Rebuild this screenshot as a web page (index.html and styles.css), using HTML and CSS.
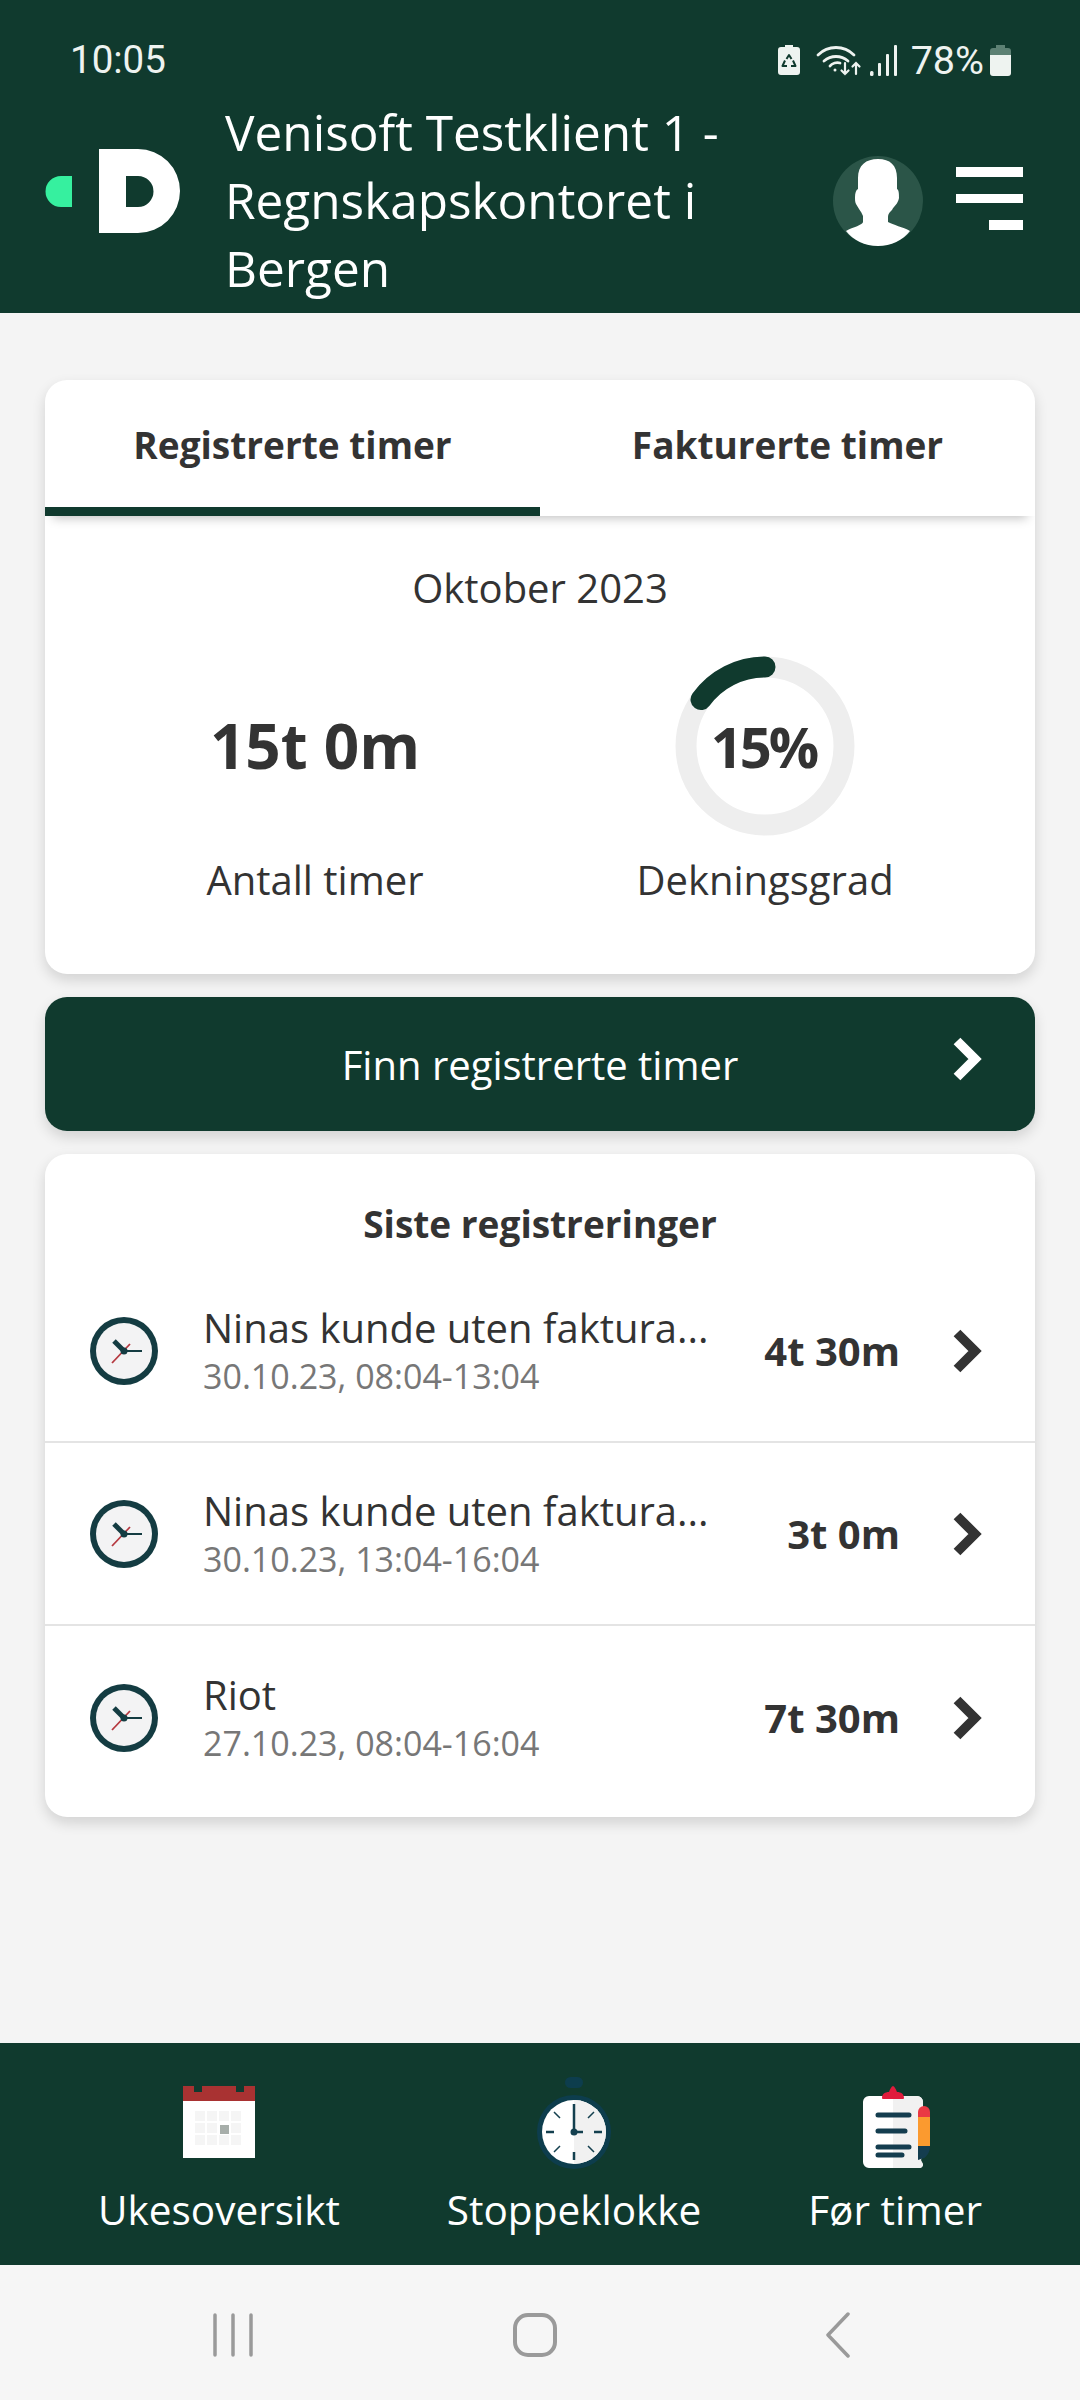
FILE: index.html
```html
<!DOCTYPE html>
<html lang="en">
<head>
    <meta charset="UTF-8">
    <meta name="viewport" content="width=device-width, initial-scale=1.0">
    <title>Timer</title>
    <link rel="stylesheet" href="styles.css">
</head>
<body>
    <header class="top">
        <div class="status">
            <span class="time">10:05</span>
            <div class="status-right">
                <svg class="st-saver" viewBox="0 0 22 30"><path fill="#eef3f0" d="M7 0h8v2h4a3 3 0 0 1 3 3v22a3 3 0 0 1-3 3H3a3 3 0 0 1-3-3V5a3 3 0 0 1 3-3h4z"/><path fill="none" stroke="#103a2e" stroke-width="2" stroke-linejoin="round" d="M8.500 14l2.500-4 2.500 4M15 15.500l2.500 5.500h-4.500M9 21H4.500L7 15.500"/></svg>
                <svg class="st-wifi" viewBox="0 0 46 32" fill="none" stroke="#eef3f0" stroke-width="2.800" stroke-linecap="round"><path d="M2 11C12 1 28 1 38 11"/><path d="M8 17c7-6 17-6 24 0"/><path d="M14 22c2-3 7-4 10-3"/><circle cx="19" cy="26" r="1.500" fill="#eef3f0" stroke="none"/><path stroke-width="2.200" d="M29 19v11m-3.500-3.500L29 30l3.500-3.500M40 30V19m-3.500 3.500L40 19l3.500 3.500"/></svg>
                <svg class="st-signal" viewBox="0 0 27 31" fill="#eef3f0"><rect x="0" y="26" width="3.500" height="5" rx="1.500"/><rect x="8" y="18" width="3" height="13" rx="1"/><rect x="16" y="9" width="3" height="22" rx="1"/><rect x="24" y="0" width="3" height="31" rx="1"/></svg>
                <span class="pct">78%</span>
                <svg class="st-batt" viewBox="0 0 21 31"><path fill="#5c8073" d="M6 0h9v3h3a3 3 0 0 1 3 3v4H0V6a3 3 0 0 1 3-3h3z"/><path fill="#eef3f0" d="M0 10h21v18a3 3 0 0 1-3 3H3a3 3 0 0 1-3-3z"/></svg>
            </div>
        </div>
        <div class="bar">
            <svg class="logo" viewBox="0 0 135 84">
                <path fill="#36f09f" d="M27 27v31H16a15.500 15.500 0 0 1 0-31z"/>
                <path fill="#fff" fill-rule="evenodd" d="M54 0h39a42 42 0 0 1 0 84H54zM81 27v31h12a15.500 15.500 0 0 0 0-31z"/>
            </svg>
            <h1 class="client">Venisoft Testklient 1 - Regnskapskontoret i Bergen</h1>
            <svg class="avatar" viewBox="0 0 90 90">
                <circle cx="45" cy="45" r="45" fill="#2b5548"/>
                <path fill="#fff" d="M25 22C25 9 33 3 45 3s19 6 19 19v11c2 1 2 5 2 9-1 6-5 8-7 12-3 3-4 4-4 8v4c5 3 15 5 22 9-7 9-19 15-32 15S20 84 13 75c7-4 17-6 17-9v-6c-2-5-5-8-7-12-1-2-1-4-1-7 0-4 1-7 3-8z"/>
            </svg>
            <div class="burger">
                <span></span>
                <span></span>
                <span class="short"></span>
            </div>
        </div>
    </header>

    <main class="content">
        <section class="card">
            <div class="tabs">
                <div class="tab active">Registrerte timer</div>
                <div class="tab">Fakturerte timer</div>
            </div>
            <p class="month">Oktober 2023</p>
            <div class="stats">
                <div class="stat">
                    <div class="stat-top"><span class="big">15t 0m</span></div>
                    <span class="stat-label">Antall timer</span>
                </div>
                <div class="stat">
                    <div class="stat-top ring-wrap">
                        <svg class="ring" viewBox="0 0 180 180" fill="none" stroke-width="21">
                            <circle cx="90" cy="90" r="79" stroke="#eeeeee"/>
                            <path d="M90 11A79 79 0 0 0 26 43.600" stroke="#103a2e" stroke-linecap="round"/>
                        </svg>
                        <span class="ring-text">15%</span>
                    </div>
                    <span class="stat-label">Dekningsgrad</span>
                </div>
            </div>
        </section>

        <a class="find-btn">
            <span>Finn registrerte timer</span>
            <svg class="chev" viewBox="0 0 30 44" fill="none" stroke="#fff" stroke-width="9.500"><path d="M5 4l18 18L5 40"/></svg>
        </a>

        <section class="card list">
            <h2 class="list-title">Siste registreringer</h2>

            <div class="row">
                <svg class="clock" viewBox="0 0 68 68"><use href="#clock-face"/></svg>
                <div class="row-text">
                    <div class="row-name">Ninas kunde uten faktura...</div>
                    <div class="row-date">30.10.23, 08:04-13:04</div>
                </div>
                <div class="row-val">4t 30m</div>
                <svg class="chev" viewBox="0 0 30 44" fill="none" stroke="#333" stroke-width="9.500"><path d="M5 4l18 18L5 40"/></svg>
            </div>

            <div class="row">
                <svg class="clock" viewBox="0 0 68 68"><use href="#clock-face"/></svg>
                <div class="row-text">
                    <div class="row-name">Ninas kunde uten faktura...</div>
                    <div class="row-date">30.10.23, 13:04-16:04</div>
                </div>
                <div class="row-val">3t 0m</div>
                <svg class="chev" viewBox="0 0 30 44" fill="none" stroke="#333" stroke-width="9.500"><path d="M5 4l18 18L5 40"/></svg>
            </div>

            <div class="row">
                <svg class="clock" viewBox="0 0 68 68"><use href="#clock-face"/></svg>
                <div class="row-text">
                    <div class="row-name">Riot</div>
                    <div class="row-date">27.10.23, 08:04-16:04</div>
                </div>
                <div class="row-val">7t 30m</div>
                <svg class="chev" viewBox="0 0 30 44" fill="none" stroke="#333" stroke-width="9.500"><path d="M5 4l18 18L5 40"/></svg>
            </div>
        </section>
    </main>

    <footer class="bottom">
        <div class="bottom-item">
            <svg class="b-icon" viewBox="0 0 72 84">
                <rect x="0" y="0" width="72" height="72" fill="#fff"/>
                <rect x="0" y="0" width="72" height="15" fill="#a93232"/>
                <rect x="11" y="0" width="8" height="6" fill="#103a2e"/>
                <rect x="53" y="0" width="8" height="6" fill="#103a2e"/>
                <g fill="#f5f5f5">
                    <rect x="12" y="25" width="10" height="10"/><rect x="24" y="25" width="10" height="10"/><rect x="36" y="25" width="10" height="10"/><rect x="48" y="25" width="10" height="10"/>
                    <rect x="12" y="37" width="10" height="10"/><rect x="24" y="37" width="10" height="10"/><rect x="48" y="37" width="10" height="10"/>
                    <rect x="12" y="49" width="10" height="10"/><rect x="24" y="49" width="10" height="10"/><rect x="36" y="49" width="10" height="10"/><rect x="48" y="49" width="10" height="10"/>
                </g>
                <rect x="37" y="39" width="9" height="9" fill="#a7aeaa"/>
            </svg>
            <span>Ukesoversikt</span>
        </div>
        <div class="bottom-item">
            <svg class="b-icon" viewBox="0 0 72 84">
                <rect x="27" y="-9" width="18" height="11" rx="5.500" fill="#0d3d4d"/>
                <circle cx="36" cy="46" r="37" fill="#0d3d4d"/>
                <circle cx="36" cy="46" r="32" fill="#fff"/>
                <path d="M36 14a32 32 0 0 1 0 64z" fill="#f1f1f1"/>
                <g stroke="#14404f" fill="none">
                    <path stroke-width="2.500" d="M36 18v28h9M36 66v8M8 46h8M56 46h8"/>
                    <path stroke-width="1.500" d="M16 26l6 6M56 26l-6 6M16 66l6-6M56 66l-6-6"/>
                </g>
                <circle cx="36" cy="46" r="3.500" fill="#14404f"/>
            </svg>
            <span>Stoppeklokke</span>
        </div>
        <div class="bottom-item">
            <svg class="b-icon" viewBox="0 0 72 84">
                <path d="M10 10h48a6 6 0 0 1 6 6v52l-3 8 3 2v-1 1a4 4 0 0 1-4 4H10a6 6 0 0 1-6-6V16a6 6 0 0 1 6-6z" fill="#fff"/>
                <path d="M34 10h24a6 6 0 0 1 6 6v52l-2 6 2 4a4 4 0 0 1-4 4H34z" fill="#f1f1f1"/>
                <path d="M23 12c0-4 3-6 7-6 1-3 3-6 4-6s3 3 4 6c4 0 7 2 7 6 0 1-1 1-2 1H25c-1 0-2 0-2-1z" fill="#e01b3c"/>
                <path d="M59 60h12c0 6-3 10-6 12l-6 2z" fill="#143d4f"/>
                <path d="M59 30h12v30H59z" fill="#fb9a2f"/>
                <path d="M59 26a6 6 0 0 1 12 0v5H59z" fill="#ea3844"/>
                <g stroke="#143d4f" stroke-width="5" stroke-linecap="round">
                    <path d="M19 29h31M19 45h27M19 61h31M19 69h24"/>
                </g>
            </svg>
            <span>Før timer</span>
        </div>
    </footer>

    <nav class="sysnav">
        <svg class="nav-recent" viewBox="0 0 40 44" stroke="#9a9a9a" stroke-width="3.500" stroke-linecap="round"><path d="M2 2v40M20 2v40M38 2v40"/></svg>
        <svg class="nav-home" viewBox="0 0 44 44" fill="none" stroke="#9a9a9a" stroke-width="4"><rect x="2" y="2" width="40" height="40" rx="13"/></svg>
        <svg class="nav-back" viewBox="0 0 26 46" fill="none" stroke="#9a9a9a" stroke-width="3.500" stroke-linecap="round" stroke-linejoin="round"><path d="M23 2L3 23l20 21"/></svg>
    </nav>

    <!-- shared list clock -->
    <svg class="defs" aria-hidden="true">
        <defs>
            <g id="clock-face">
                <circle cx="34" cy="34" r="34" fill="#143c42"/>
                <circle cx="34" cy="34" r="28" fill="#f3f3f4"/>
                <path d="M22 46L40 27" stroke="#b5383f" stroke-width="1.800"/>
                <path d="M34 34h18" stroke="#143c42" stroke-width="2"/>
                <path d="M24 24l10 10" stroke="#143c42" stroke-width="5"/>
                <circle cx="34" cy="34" r="3.500" fill="#143c42"/>
            </g>
        </defs>
    </svg>
</body>
</html>
```

FILE: styles.css
```css
* {
    box-sizing: border-box;
}

body {
    margin: 0;
    width: 1080px;
    height: 2400px;
    display: flex;
    flex-direction: column;
    background-color: #f4f4f4;
    color: #333;
    font-family: 'Open Sans', sans-serif;
}

/* Top */
.top {
    height: 313px;
    background-color: #103a2e;
    color: #fff;
}

.status {
    height: 100px;
    padding: 37px 69px 0 70px;
    display: flex;
    justify-content: space-between;
    align-items: flex-start;
    color: #eef3f0;
}

.time {
    font-family: Roboto, sans-serif;
    font-size: 38.500px;
    line-height: 46px;
}

.status-right {
    display: flex;
    align-items: center;
    height: 46px;
}

.st-saver {
    width: 22px;
    height: 30px;
    margin-right: 16px;
}

.st-wifi {
    width: 46px;
    height: 32px;
    margin-right: 8px;
}

.st-signal {
    width: 27px;
    height: 31px;
    margin-right: 14px;
}

.pct {
    font-family: Roboto, sans-serif;
    font-size: 39.500px;
    margin-right: 6px;
}

.st-batt {
    width: 21px;
    height: 31px;
}

.bar {
    display: flex;
    align-items: flex-start;
    padding-left: 45px;
}

.logo {
    width: 135px;
    height: 84px;
    margin-top: 49px;
    flex: none;
}

.client {
    flex: none;
    width: 607px;
    margin: -2px 0 0 45px;
    margin-right: 1px;
    padding-right: 40px;
    font-size: 49.500px;
    font-weight: 400;
    line-height: 68px;
}

.avatar {
    width: 90px;
    height: 90px;
    margin-top: 56px;
    flex: none;
}

.burger {
    width: 67px;
    margin-top: 67px;
    margin-left: 33px;
    display: flex;
    flex-direction: column;
    align-items: flex-end;
    gap: 17px;
}

.burger span {
    display: block;
    width: 100%;
    height: 9.500px;
    background-color: #fff;
}

.burger .short {
    width: 34px;
}

/* Content */
.content {
    flex: 1;
    padding: 67px 45px 0;
    display: flex;
    flex-direction: column;
    gap: 23px;
}

.card {
    background: white;
    border-radius: 22px;
    box-shadow: 0 6px 14px rgba(0, 0, 0, 0.14);
    overflow: hidden;
}

.tabs {
    display: flex;
    height: 136px;
    box-shadow: 0 10px 10px -8px rgba(0, 0, 0, 0.25);
}

.tab {
    flex: 1;
    height: 136px;
    padding-top: 40px;
    text-align: center;
    font-size: 37px;
    line-height: 50px;
    font-weight: 700;
}

.tab.active {
    border-bottom: 9px solid #103a2e;
}

.month {
    margin: 46px 0 0;
    text-align: center;
    font-size: 40px;
    line-height: 52px;
}

.stats {
    display: grid;
    grid-template-columns: 1fr 1fr;
    padding: 0 45px 68px;
    margin-top: 42px;
}

.stat {
    display: flex;
    flex-direction: column;
    align-items: center;
}

.stat-top {
    height: 180px;
    display: flex;
    align-items: center;
    justify-content: center;
}

.big {
    font-size: 62px;
    font-weight: 700;
    margin-bottom: 3px;
}

.ring-wrap {
    display: grid;
    place-items: center;
}

.ring,
.ring-text {
    grid-area: 1 / 1;
}

.ring {
    width: 180px;
    height: 180px;
}

.ring-text {
    font-size: 56px;
    font-weight: 700;
    letter-spacing: -3px;
    margin-right: 3px;
}

.stat-label {
    margin-top: 18px;
    font-size: 40px;
    line-height: 52px;
}

.find-btn {
    height: 134px;
    background-color: #103a2e;
    border-radius: 22px;
    box-shadow: 0 6px 14px rgba(0, 0, 0, 0.14);
    color: #fff;
    font-size: 40px;
    display: grid;
    grid-template-columns: 1fr;
    align-items: center;
    justify-items: center;
}

.find-btn span,
.find-btn .chev {
    grid-area: 1 / 1;
}

.find-btn .chev {
    justify-self: end;
    margin-right: 53px;
    margin-bottom: 10px;
}

.chev {
    width: 30px;
    height: 44px;
    flex: none;
}

/* List */
.list {
    padding-top: 45px;
    padding-bottom: 8px;
}

.list-title {
    margin: 0 0 11px;
    text-align: center;
    font-size: 37px;
    line-height: 50px;
    font-weight: 700;
}

.row {
    height: 183px;
    padding: 0 53px 0 45px;
    display: flex;
    align-items: center;
    border-bottom: 2px solid #e4e4e4;
}

.row:last-child {
    border-bottom: none;
}

.clock {
    width: 68px;
    height: 68px;
    flex: none;
}

.row-text {
    flex: 1;
    margin-left: 45px;
}

.row-name {
    font-size: 40px;
    line-height: 51px;
}

.row-date {
    font-size: 34px;
    line-height: 46px;
    color: #777;
}

.row-val {
    font-size: 40px;
    font-weight: 700;
    margin-right: 52px;
}

/* Bottom */
.bottom {
    height: 222px;
    background-color: #103a2e;
    color: #fff;
    padding: 43px 98px 0;
    display: flex;
    justify-content: space-between;
}

.bottom-item {
    display: flex;
    flex-direction: column;
    align-items: center;
    font-size: 40.500px;
}

.b-icon {
    width: 72px;
    height: 84px;
    overflow: visible;
}

.bottom-item span {
    margin-top: 14px;
    line-height: 52px;
}

.sysnav {
    height: 135px;
    background-color: #f6f6f6;
    display: flex;
    align-items: center;
    padding: 5px 0 0 213px;
}

.nav-recent {
    width: 40px;
    height: 44px;
    margin-right: 260px;
}

.nav-home {
    width: 44px;
    height: 44px;
    margin-right: 268px;
}

.nav-back {
    width: 26px;
    height: 46px;
}

.defs {
    width: 0;
    height: 0;
    position: absolute;
}
```
